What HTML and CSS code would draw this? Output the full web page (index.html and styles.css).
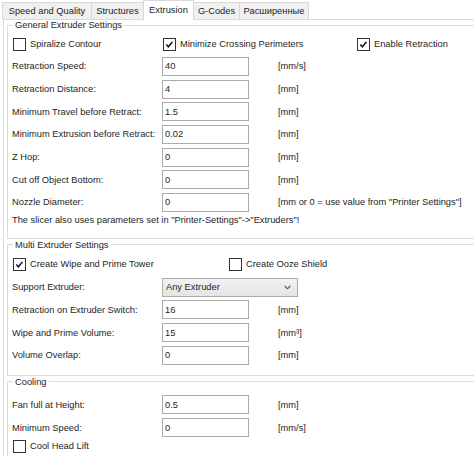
FILE: index.html
```html
<!DOCTYPE html>
<html>
<head>
<meta charset="utf-8">
<link rel="stylesheet" href="styles.css">
</head>
<body>
<div class="tabs">
  <div class="tab t1">Speed and Quality</div>
  <div class="tab t2">Structures</div>
  <div class="tab t3 sel">Extrusion</div>
  <div class="tab t4">G-Codes</div>
  <div class="tab t5">Расширенные</div>
</div>
<div class="page">
  <fieldset class="group g1">
    <legend>General Extruder Settings</legend>
    <div class="checks">
      <label class="chk w150"><span class="box"></span>Spiralize Contour</label>
      <label class="chk w194"><span class="box"><svg viewBox="0 0 13 13" class="tick"><path d="M2.8 6.6 L5.2 9.2 L10 3.4"/></svg></span>Minimize Crossing Perimeters</label>
      <label class="chk"><span class="box"><svg viewBox="0 0 13 13" class="tick"><path d="M2.8 6.6 L5.2 9.2 L10 3.4"/></svg></span>Enable Retraction</label>
    </div>
    <div class="row"><span class="lbl">Retraction Speed:</span><span class="input">40</span><span class="unit">[mm/s]</span></div>
    <div class="row"><span class="lbl">Retraction Distance:</span><span class="input">4</span><span class="unit">[mm]</span></div>
    <div class="row"><span class="lbl">Minimum Travel before Retract:</span><span class="input">1.5</span><span class="unit">[mm]</span></div>
    <div class="row"><span class="lbl">Minimum Extrusion before Retract:</span><span class="input">0.02</span><span class="unit">[mm]</span></div>
    <div class="row"><span class="lbl">Z Hop:</span><span class="input">0</span><span class="unit">[mm]</span></div>
    <div class="row"><span class="lbl">Cut off Object Bottom:</span><span class="input">0</span><span class="unit">[mm]</span></div>
    <div class="row"><span class="lbl">Nozzle Diameter:</span><span class="input">0</span><span class="unit">[mm or 0 = use value from "Printer Settings"]</span></div>
    <div class="note">The slicer also uses parameters set in "Printer-Settings"-&gt;"Extruders"!</div>
  </fieldset>
  <fieldset class="group g2">
    <legend>Multi Extruder Settings</legend>
    <div class="checks c23">
      <label class="chk w216"><span class="box"><svg viewBox="0 0 13 13" class="tick"><path d="M2.8 6.6 L5.2 9.2 L10 3.4"/></svg></span>Create Wipe and Prime Tower</label>
      <label class="chk"><span class="box"></span>Create Ooze Shield</label>
    </div>
    <div class="row"><span class="lbl">Support Extruder:</span><span class="select">Any Extruder<svg viewBox="0 0 8 5" class="chev"><path d="M0.8 0.8 L4 4 L7.2 0.8"/></svg></span></div>
    <div class="row"><span class="lbl">Retraction on Extruder Switch:</span><span class="input">16</span><span class="unit">[mm]</span></div>
    <div class="row"><span class="lbl">Wipe and Prime Volume:</span><span class="input">15</span><span class="unit">[mm³]</span></div>
    <div class="row"><span class="lbl">Volume Overlap:</span><span class="input">0</span><span class="unit">[mm]</span></div>
  </fieldset>
  <fieldset class="group g3">
    <legend>Cooling</legend>
    <div class="row"><span class="lbl">Fan full at Height:</span><span class="input">0.5</span><span class="unit">[mm]</span></div>
    <div class="row"><span class="lbl">Minimum Speed:</span><span class="input">0</span><span class="unit">[mm/s]</span></div>
    <div class="checks c17">
      <label class="chk"><span class="box"></span>Cool Head Lift</label>
    </div>
  </fieldset>
</div>
</body>
</html>
```

FILE: styles.css
```css
html, body {
  margin: 0;
  padding: 0;
  background: #ffffff;
  overflow: hidden;
}
body {
  width: 474px;
  height: 456px;
  font-family: "Liberation Sans", Arial, sans-serif;
  font-size: 9.3px;
  color: #1e1e1e;
}
.tabs {
  display: flex;
  align-items: flex-end;
  height: 19px;
  padding-left: 2px;
  position: relative;
  z-index: 2;
}
.tab {
  box-sizing: border-box;
  height: 17px;
  border: 1px solid #d9d9d9;
  border-bottom: none;
  background: #f0f0f0;
  margin-right: -1px;
  display: flex;
  align-items: center;
  justify-content: center;
  white-space: nowrap;
}
.t1 { width: 90px; }
.t2 { width: 53px; }
.t3 { width: 51px; }
.t4 { width: 47px; }
.t5 { width: 70px; }
.tab.sel {
  height: 20px;
  margin-bottom: -1px;
  background: #ffffff;
  position: relative;
  z-index: 3;
  padding-bottom: 2px;
}
.page {
  margin-left: 3px;
  width: 520px;
  height: 460px;
  border-top: 1px solid #d9d9d9;
  border-left: 1px solid #d9d9d9;
  padding-left: 3px;
  box-sizing: border-box;
}
.group {
  margin: 0;
  min-width: 0;
  border: 1px solid #dcdcdc;
  padding: 2px 4px 0 4px;
  width: 560px;
  box-sizing: border-box;
}
.group legend {
  padding: 0 2px;
  margin-left: 1px;
  line-height: 12px;
  height: 12px;
}
.g1 { margin-top: -1px; padding-bottom: 12px; }
.g2 { padding-bottom: 8px; }
.g3 { padding-top: 6px; border-bottom: none; height: 90px; }
.checks {
  display: flex;
  align-items: center;
  height: 22px;
}
.checks.c23 { height: 23px; }
.checks.c17 { height: 15px; }
.chk {
  display: flex;
  align-items: center;
  gap: 4px;
  white-space: nowrap;
}
.w150 { width: 150px; }
.w194 { width: 194px; }
.w216 { width: 216px; }
.box {
  box-sizing: border-box;
  width: 13px;
  height: 13px;
  border: 1px solid #333333;
  background: #ffffff;
  margin-left: 1px;
  display: flex;
  align-items: center;
  justify-content: center;
}
.tick {
  width: 11px;
  height: 11px;
  fill: none;
  stroke: #111111;
  stroke-width: 1.8;
}
.row {
  display: grid;
  grid-template-columns: 150px 87px auto;
  align-items: center;
  height: 22.7px;
  white-space: nowrap;
}
.unit {
  padding-left: 29px;
}
.input {
  box-sizing: border-box;
  height: 19px;
  border: 1px solid #ababab;
  background: #ffffff;
  padding-left: 2px;
  display: flex;
  align-items: center;
}
.select {
  grid-column: 2 / 4;
  box-sizing: border-box;
  width: 136px;
  height: 19px;
  border: 1px solid #acacac;
  background: linear-gradient(#f2f2f2, #e5e5e5);
  padding-left: 3px;
  display: flex;
  align-items: center;
  justify-content: space-between;
  padding-right: 6px;
}
.chev {
  width: 7px;
  height: 5px;
  fill: none;
  stroke: #555555;
  stroke-width: 1.3;
}
.note {
  height: 12px;
  line-height: 12px;
  white-space: nowrap;
}
```
